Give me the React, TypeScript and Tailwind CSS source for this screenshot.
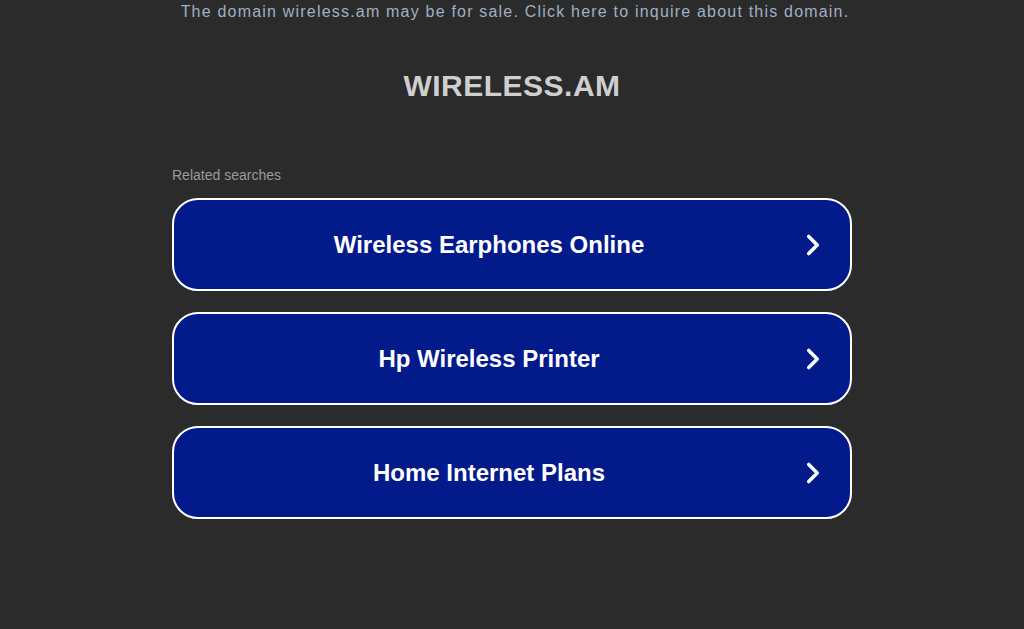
import { ChevronRight } from "lucide-react";

const searches = ["Wireless Earphones Online", "Hp Wireless Printer", "Home Internet Plans"];

export default function App() {
  return (
    <div className="min-h-[629px] bg-[#2b2b2b] font-['Liberation_Sans',Arial,sans-serif]">
      <div className="pl-[6px] text-center">
        <a className="text-[16px] leading-[22px] tracking-[1.2px] text-[#a0b0c4]">
          The domain wireless.am may be for sale. Click here to inquire about this domain.
        </a>
      </div>
      <h1 className="mt-[45px] text-center text-[30px] font-bold leading-[34px] tracking-[0.5px] text-[#cfcfcf]">
        WIRELESS.AM
      </h1>
      <div className="mx-auto mt-[64px] w-[680px]">
        <p className="text-[14px] leading-[16px] text-[#9a9a9a]">Related searches</p>
        <div className="mt-[15px] flex flex-col gap-[21px]">
          {searches.map((s) => (
            <a
              key={s}
              className="flex h-[93px] items-center rounded-[26px] border-2 border-white bg-[#021a8a] pl-[8px] pr-[20px]"
            >
              <span className="flex-1 text-center text-[24px] font-bold text-white">{s}</span>
              <ChevronRight className="h-[34px] w-[34px] text-white" strokeWidth={2.5} />
            </a>
          ))}
        </div>
      </div>
    </div>
  );
}
